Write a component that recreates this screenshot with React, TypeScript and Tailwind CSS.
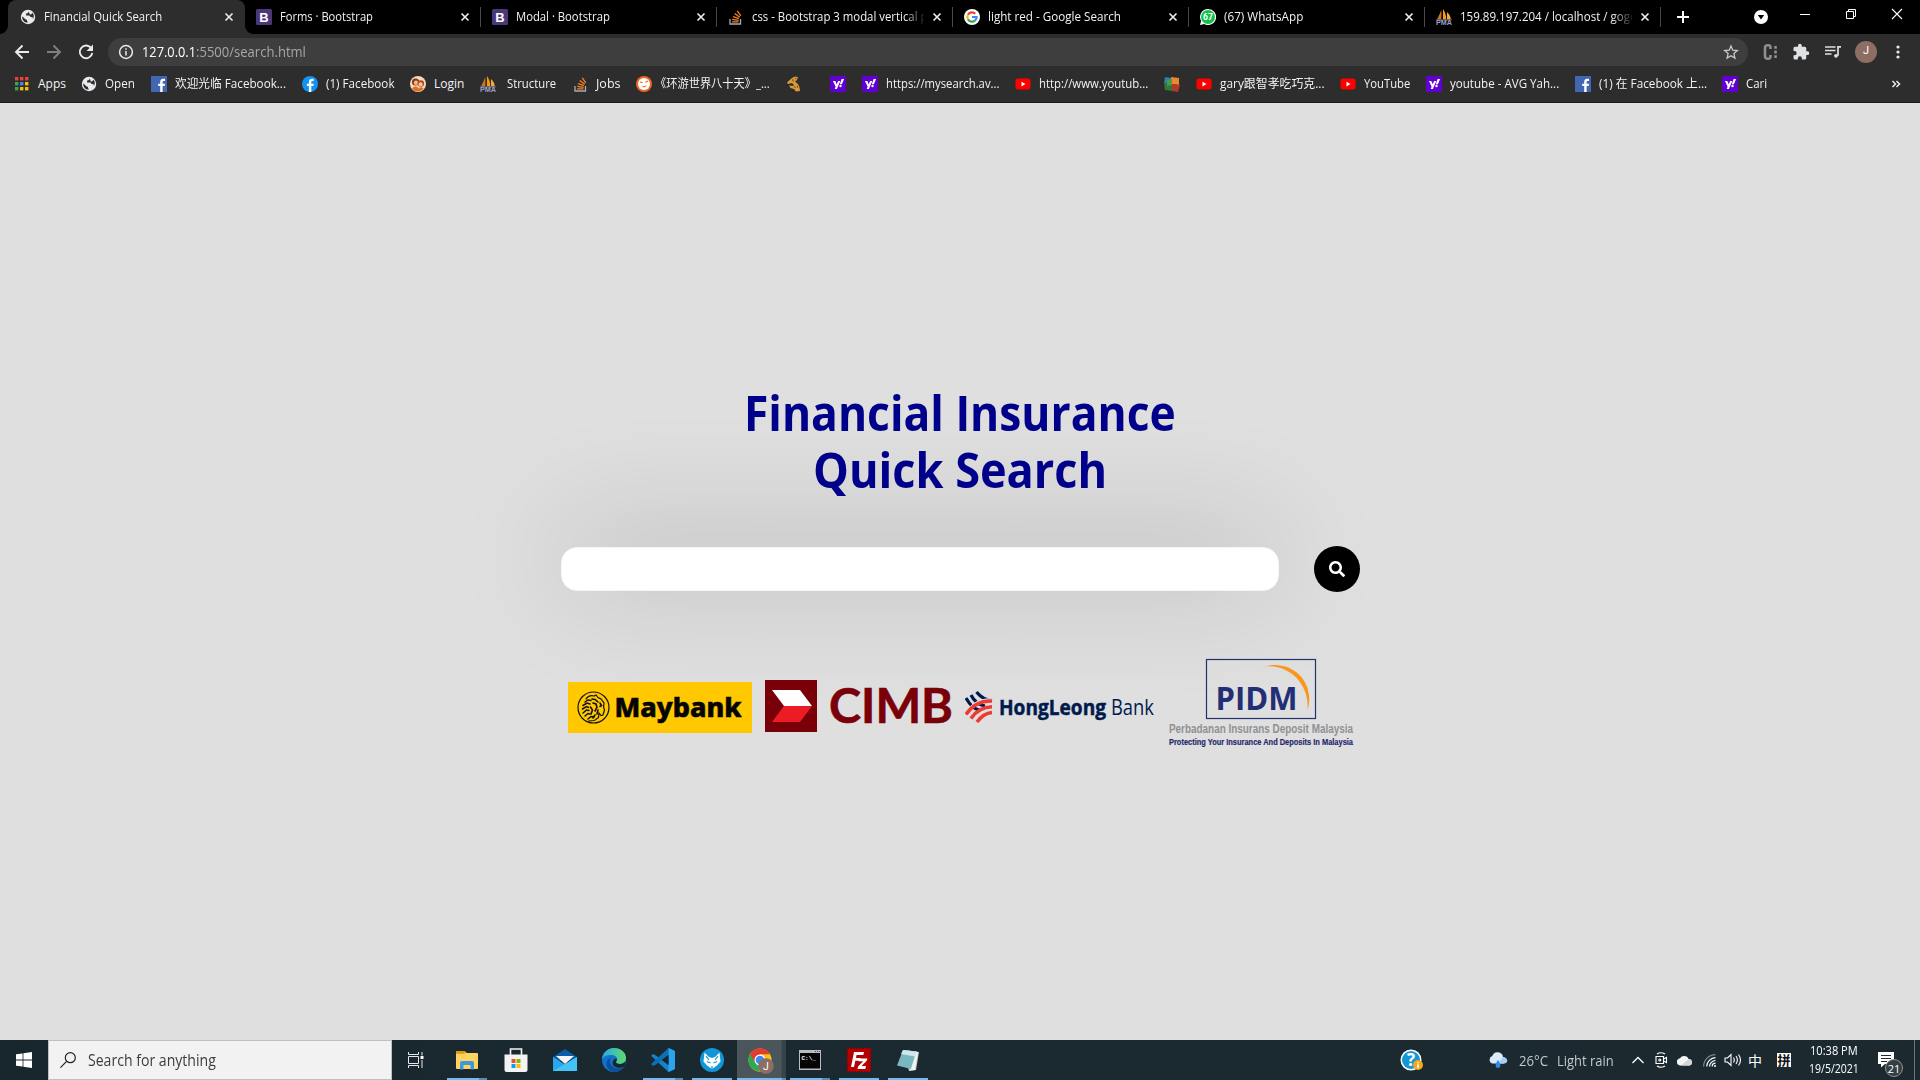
import React, { useLayoutEffect, useRef, useState } from "react";

const UI_FONT = "font-['Open_Sans','Noto_Sans_CJK_SC',sans-serif]";

/* One line of text, condensed or widened to a given width. */
function Fit({ text, w, className = "" }: { text: string; w: number; className?: string }) {
  const ref = useRef<HTMLSpanElement>(null);
  const [scale, setScale] = useState(1);
  useLayoutEffect(() => {
    if (ref.current) setScale(w / ref.current.offsetWidth);
  }, [w, text]);
  return (
    <span className={`block shrink-0 whitespace-nowrap ${className}`} style={{ width: w }}>
      <span ref={ref} className="inline-block origin-left" style={{ transform: `scaleX(${scale})` }}>
        {text}
      </span>
    </span>
  );
}

/* ---------- favicons ---------- */
const Globe = () => (
  <svg className="block size-4" viewBox="0 0 16 16">
    <circle cx="8" cy="8" r="7.2" fill="#e8eaed" />
    <path d="M2.2 7.2 5.6 10.4 7 10.8v1.2l1 1.6C4.600 13.800 2 11.200 2.200 7.200zM8.800 2.400 8 4 6.200 4.600 6 6.400h3.400l1.200 1.600 2 .2.4 1.800c1.200-2 1-4.800-.6-6.200l-1 1.400-1.600.2z" fill="#2d2d2d" />
  </svg>
);
const Boot = () => (
  <svg className="block size-4" viewBox="0 0 16 16">
    <rect width="16" height="16" rx="1.500" fill="#4c3778" />
    <text x="8" y="12.600" textAnchor="middle" fontSize="13" fontWeight="700" fontFamily="Liberation Sans, sans-serif" fill="#fff">B</text>
  </svg>
);
const Stack = () => (
  <svg className="block size-4" viewBox="0 0 16 16" fill="none" strokeWidth="1.300">
    <path d="M2 10v5h10.500v-5" stroke="#a8adb2" />
    <path d="M4 12.800h6.500M4.200 10.400l6.400.9M5 7.600l5.900 2.100M6.700 4.600l5 3.700M9.300 1.800l3.500 5" stroke="#f48024" />
  </svg>
);
const Google = () => (
  <svg className="block size-4" viewBox="0 0 16 16">
    <circle cx="8" cy="8" r="8" fill="#fff" />
    <g fill="none" strokeWidth="2.200">
      <path d="M11.300 4.700A4.700 4.700 0 0 0 3.900 5.800" stroke="#ea4335" />
      <path d="M3.900 5.800a4.700 4.700 0 0 0 0 4.400" stroke="#fbbc05" />
      <path d="M3.900 10.200a4.700 4.700 0 0 0 7.100 1.400" stroke="#34a853" />
      <path d="M11 11.600A4.500 4.500 0 0 0 12.600 8H8" stroke="#4285f4" />
    </g>
  </svg>
);
const Whats = () => (
  <svg className="block size-4" viewBox="0 0 16 16">
    <path d="M8 0a8 8 0 1 1-3.800 15L0 16l1.100-4A8 8 0 0 1 8 0z" fill="#fff" />
    <circle cx="8" cy="8" r="7" fill="#12c04a" />
    <text x="8" y="11" textAnchor="middle" fontSize="8.500" fontWeight="700" fontFamily="Roboto, sans-serif" fill="#fff">67</text>
  </svg>
);
const Pma = () => (
  <svg className="block size-4" viewBox="0 0 16 16">
    <path d="M5.500 1 1 10.500h4.300z" fill="#c8791a" />
    <path d="M7 0v10.500h3.200C10.500 6.500 9 2.500 7 0z" fill="#f89c0e" />
    <path d="M11 3v7.500h3.800C14.800 7.500 13 4.800 11 3z" fill="#f6a93b" />
    <path d="M0 10.500h16l-.5 1H.5z" fill="#6c78af" />
    <text x="0" y="16" fontSize="6.500" textLength="16" lengthAdjust="spacingAndGlyphs" fontWeight="700" fontFamily="Liberation Sans, sans-serif" fill="#9aa0c4">PMA</text>
  </svg>
);
const Apps = () => {
  const c = ["#ea4335", "#ea4335", "#ea4335", "#34a853", "#4285f4", "#fbbc05", "#34a853", "#fbbc05", "#fbbc05"];
  return (
    <svg className="block size-4" viewBox="0 0 16 16">
      {c.map((f, i) => (
        <rect key={i} x={1 + (i % 3) * 5} y={1 + Math.floor(i / 3) * 5} width="3.400" height="3.400" fill={f} />
      ))}
    </svg>
  );
};
const F_PATH = "M9.200 16v-5.900h-2V7.800h2V6c0-2.100 1.200-3.200 3.100-3.200.8 0 1.500.1 1.700.1V5h-1.200c-1 0-1.200.5-1.200 1.200v1.600H14l-.3 2.300h-2.100V16z";
const FbSquare = () => (
  <svg className="block size-4" viewBox="0 0 16 16"><rect width="16" height="16" fill="#4267b2" /><path d={F_PATH} fill="#fff" /></svg>
);
const FbRound = () => (
  <svg className="block size-4" viewBox="0 0 16 16"><circle cx="8" cy="8" r="8" fill="#1195f5" /><path d={F_PATH} transform="translate(-2.300 0)" fill="#fff" /></svg>
);
const Login = () => (
  <svg className="block size-4" viewBox="0 0 16 16">
    <circle cx="8" cy="8" r="8" fill="#f3d9bd" />
    <circle cx="5.600" cy="6" r="3.600" fill="#8a3414" /><circle cx="6" cy="6.800" r="2.200" fill="#f3b98a" />
    <circle cx="10.800" cy="7.600" r="3.300" fill="#b4471a" /><circle cx="10.600" cy="8.400" r="2.100" fill="#f7c79b" />
    <path d="M2 13c1-3 5-3.400 6.500-.6 2-2 4.500-1.200 5 .6a8 8 0 0 1-11.500 0z" fill="#e2711d" />
  </svg>
);
const Orange = () => (
  <svg className="block size-4" viewBox="0 0 16 16">
    <circle cx="8" cy="8" r="8" fill="#f26522" /><circle cx="8" cy="8" r="6" fill="#fff" />
    <path d="M4 6 6.500 6.600M12 5 9.500 6.200M6.500 10.300c1.500.8 2.800.4 3.800-.8" stroke="#f26522" strokeWidth="1.100" fill="none" />
  </svg>
);
const Giraffe = () => (
  <svg className="block size-4" viewBox="0 0 16 16">
    <path d="M1 6.500 6 2l3-1.500L12 1l-1 3-2 1.500c2 1.500 4 3 4.500 6L14 15l-4 .5-2-2.500-3.500-1L3 9.500l4 .5 1-1-2-2-4 1z" fill="#d99a3a" />
    <path d="m6 3 2 1-1 2zM9 1.500l2 1-1.500 1zM8 10l2 1-1 1.500zM11 9l1.500 2-1.500 1z" fill="#7f4a14" />
  </svg>
);
const Yahoo = () => (
  <svg className="block size-4" viewBox="0 0 16 16">
    <rect width="16" height="16" fill="#6001d2" />
    <path d="M3 5h2.300l1.400 3.300L8.100 5h2.200L6.900 13H4.700l.9-2.200zM11.600 3h2.500l-2.200 5.300H9.800z" fill="#fff" /><circle cx="10.500" cy="10" r="1.200" fill="#fff" />
  </svg>
);
const Yt = () => (
  <svg className="block size-4" viewBox="0 0 16 16"><rect x="0.500" y="2.600" width="15" height="11" rx="2.800" fill="#f00" /><path d="M6.500 5.800v4.600L10.500 8z" fill="#fff" /></svg>
);
const Avg = () => (
  <svg className="block size-4" viewBox="0 0 16 16">
    <path d="m1 1 6 1v6L0 7z" fill="#2b7fb3" /><path d="m7 1 8 1v7L7 8z" fill="#e8892b" />
    <path d="M0 7l8 1v7l-7-1z" fill="#2f7a3b" /><path d="m8 8 8 1-2 7-6-1z" fill="#b5382a" /><path d="m3 4 5-1v6l-5 1z" fill="#4f9a44" />
  </svg>
);
const Puzzle = () => (
  <svg className="block size-[18px]" viewBox="0 0 24 24" fill="#dfe1e5">
    <path d="M20.500 11H19V7a2 2 0 0 0-2-2h-4V3.500a2.500 2.500 0 0 0-5 0V5H4a2 2 0 0 0-2 2v3.800h1.500a2.700 2.700 0 0 1 0 5.400H2V20a2 2 0 0 0 2 2h3.800v-1.500a2.700 2.700 0 0 1 5.400 0V22H17a2 2 0 0 0 2-2v-4h1.500a2.500 2.500 0 0 0 0-5z" />
  </svg>
);
const Cross = () => (
  <svg className="block size-4" viewBox="0 0 16 16" stroke="#e8eaed" strokeWidth="1.700"><path d="m4.500 4.500 7 7m0-7-7 7" /></svg>
);

/* ---------- browser ---------- */
const tabs: { icon: React.ReactNode; title: string; w: number }[] = [
  { icon: <Globe />, title: "Financial Quick Search", w: 118 },
  { icon: <Boot />, title: "Forms · Bootstrap", w: 93 },
  { icon: <Boot />, title: "Modal · Bootstrap", w: 94 },
  { icon: <Stack />, title: "css - Bootstrap 3 modal vertical po", w: 182 },
  { icon: <Google />, title: "light red - Google Search", w: 133 },
  { icon: <Whats />, title: "(67) WhatsApp", w: 79 },
  { icon: <Pma />, title: "159.89.197.204 / localhost / goge", w: 176 },
];

function Tabs() {
  return (
    <div className="flex h-[34px] bg-black pl-2">
      {tabs.map((t, i) => (
        <div key={i} className={i === 0 ? "relative flex h-full w-[237px] shrink-0 items-center rounded-t-lg bg-[#2d2d2d] pl-3" : "relative flex h-full w-[236px] shrink-0 items-center pl-[11px]"}>
          {i === 0 && (
            <>
              <span className="absolute bottom-0 -left-2 size-2 bg-[radial-gradient(circle_at_0_0,transparent_7.5px,#2d2d2d_8px)]" />
              <span className="absolute -right-2 bottom-0 size-2 bg-[radial-gradient(circle_at_100%_0,transparent_7.5px,#2d2d2d_8px)]" />
            </>
          )}
          {t.icon}
          <div className="ml-2 w-[172px] overflow-hidden [mask-image:linear-gradient(to_right,black_152px,transparent_174px)]">
            <Fit text={t.title} w={t.w} className="text-[12px] leading-[18px] text-[#f1f3f4]" />
          </div>
          <span className="ml-[5px]"><Cross /></span>
          {i > 0 && <span className="absolute top-[7px] right-0 h-5 w-px bg-[#4a4a4a]" />}
        </div>
      ))}
      <svg className="mt-[9px] ml-[14px] block size-4" viewBox="0 0 16 16" stroke="#fff" strokeWidth="2"><path d="M8 2v12M2 8h12" /></svg>
      <svg className="mt-[9px] ml-[62px] block size-4" viewBox="0 0 16 16"><circle cx="8" cy="8" r="7" fill="#fff" /><path d="M4.800 6h6.400L8 10.400z" fill="#000" /></svg>
      <svg className="mt-[6px] ml-[28px] block size-4" viewBox="0 0 16 16" stroke="#fff"><path d="M3 8.500h10" /></svg>
      <svg className="mt-[6px] ml-[30px] block size-4" viewBox="0 0 16 16" stroke="#fff" fill="none"><path d="M3.500 5.500h7v7h-7zM5.500 5.500v-2h7v7h-2" /></svg>
      <svg className="mt-[6px] ml-[30px] block size-4" viewBox="0 0 16 16" stroke="#fff" strokeWidth="1.100"><path d="m3 3 10 10m0-10L3 13" /></svg>
    </div>
  );
}

function Toolbar() {
  return (
    <div className="flex h-[35px] items-center pl-[11px]">
      <svg className="block size-5" viewBox="0 0 20 20" stroke="#e8eaed" strokeWidth="1.900" fill="none"><path d="M18 10H5M11.500 3.500 5 10l6.500 6.500" /></svg>
      <svg className="ml-[13px] block size-5" viewBox="0 0 20 20" stroke="#7d7f82" strokeWidth="1.900" fill="none"><path d="M3 10h12.500M9.500 3.500 16 10l-6.500 6.500" /></svg>
      <svg className="ml-3 block size-5" viewBox="0 0 20 20" fill="none"><path d="M15.300 6.300A6.300 6.300 0 1 0 16.300 11" stroke="#e8eaed" strokeWidth="1.900" /><path d="M17 2.500V9h-6.500z" fill="#e8eaed" /></svg>
      <div className="ml-3 flex h-7 w-[1640px] items-center rounded-full bg-[#3e3e3e] pr-[9px] pl-[10px]">
        <svg className="block size-4" viewBox="0 0 16 16" stroke="#e8eaed" strokeWidth="1.500" fill="none"><circle cx="8" cy="8" r="6.400" /><path d="M8 7v4.600M8 4.300v1.500" /></svg>
        <Fit text="127.0.0.1" w={54} className="ml-2 text-[14px] leading-5 text-white" />
        <Fit text=":5500/search.html" w={110} className="text-[14px] leading-5 text-[#a5a7aa]" />
        <svg className="ml-auto block size-4" viewBox="0 0 24 24" fill="none" stroke="#c9cbce" strokeWidth="1.900"><path d="m12 3 2.600 6.300 6.900.6-5.200 4.500 1.600 6.700-5.900-3.600-5.900 3.600 1.600-6.700L2.500 9.900l6.900-.6z" /></svg>
      </div>
      <svg className="ml-[14px] block h-[18px] w-4" viewBox="0 0 16 18" fill="none" stroke="#8d8f92" strokeWidth="2.600"><path d="M8.500 6V4.500A2 2 0 0 0 6.500 2.300h-1a2.500 2.500 0 0 0-2.500 2.500v8.400a2.500 2.500 0 0 0 2.500 2.500h1a2 2 0 0 0 2-2.200V12" /><path d="M13.500 3v12" strokeDasharray="2.800 1.800" /></svg>
      <span className="ml-[14px]"><Puzzle /></span>
      <svg className="ml-[14px] block size-[18px]" viewBox="0 0 18 18" fill="none" stroke="#dfe1e5" strokeWidth="1.700"><path d="M1 4h10.500M1 7.500h10.500M1 11h6.500M17 3.800h-3v9" /><circle cx="12" cy="12.800" r="1.900" fill="#dfe1e5" stroke="none" /></svg>
      <span className="ml-[13px] flex size-[22px] items-center justify-center rounded-full bg-[#8d6e63] font-[Roboto,sans-serif] text-[11px] text-white">J</span>
      <svg className="ml-[13px] block size-4" viewBox="0 0 16 16" fill="#e8eaed"><circle cx="8" cy="3" r="1.600" /><circle cx="8" cy="8" r="1.600" /><circle cx="8" cy="13" r="1.600" /></svg>
    </div>
  );
}

/* box = full slot width; w = label width */
const marks: { icon: React.ReactNode; text?: string; w?: number; box: number; gap?: number }[] = [
  { icon: <Apps />, text: "Apps", w: 28, box: 67 },
  { icon: <Globe />, text: "Open", w: 30, box: 70 },
  { icon: <FbSquare />, text: "欢迎光临 Facebook...", w: 111, box: 151 },
  { icon: <FbRound />, text: "(1) Facebook", w: 69, box: 108 },
  { icon: <Login />, text: "Login", w: 30, box: 70 },
  { icon: <Pma />, text: "Structure", w: 49, box: 93, gap: 11 },
  { icon: <Stack />, text: "Jobs", w: 25, box: 63, gap: 7 },
  { icon: <Orange />, text: "《环游世界八十天》_...", w: 115, box: 150, gap: 3 },
  { icon: <Giraffe />, box: 44 },
  { icon: <Yahoo />, box: 32 },
  { icon: <Yahoo />, text: "https://mysearch.av...", w: 113, box: 153 },
  { icon: <Yt />, text: "http://www.youtub...", w: 109, box: 149 },
  { icon: <Avg />, box: 32 },
  { icon: <Yt />, text: "gary跟智孝吃巧克...", w: 105, box: 144 },
  { icon: <Yt />, text: "YouTube", w: 46, box: 86 },
  { icon: <Yahoo />, text: "youtube - AVG Yah...", w: 109, box: 149 },
  { icon: <FbSquare />, text: "(1) 在 Facebook 上...", w: 108, box: 147 },
  { icon: <Yahoo />, text: "Cari", w: 21, box: 168 },
];

function Bookmarks() {
  return (
    <div className="flex h-[34px] items-center border-b border-[#1c1c1c] pb-[3px] pl-[14px]">
      {marks.map((m, i) => (
        <div key={i} className="flex shrink-0 items-center" style={{ width: m.box }}>
          {m.icon}
          {m.text && (
            <span style={{ marginLeft: m.gap ?? 8 }}>
              <Fit text={m.text} w={m.w!} className="text-[12px] leading-[18px] text-[#f1f3f4]" />
            </span>
          )}
        </div>
      ))}
      <svg className="block size-3" viewBox="0 0 12 12" fill="none" stroke="#e8eaed" strokeWidth="1.500"><path d="m2.500 3 3 3-3 3M6.500 3l3 3-3 3" /></svg>
    </div>
  );
}

/* ---------- bank logos ---------- */
const Maybank = () => (
  <svg className="block h-[51px] w-[184px]" viewBox="0 0 184 51">
    <rect width="184" height="51" fill="#ffc800" />
    <circle cx="25.500" cy="25.500" r="15.500" fill="none" stroke="#111" strokeWidth="1.200" />
    <g fill="none" stroke="#111" strokeWidth="1.200" strokeLinecap="round">
      <path d="M18 17c2-3 5-4 8-3l2-1 2 2.500 3 1.500 3 4-.5 4 1 3-1.500 5-2 .5-2-2.500-.5 4.500-4 3-6 .5" />
      <path d="M17 20l3-2 3 .5M15 23.500l4-2.500 3 1M14.500 27l4-2.500 2 1M15 31l3.500-3 2.500.5M17 34l3-2.500 2 .5M20 37l3-2.500 3 .5" strokeWidth="1.500" />
      <path d="M24 17l3 .5 3 2.500M25 21l3 1 1 3.500-2 3.500M32 21l1.500 2.500-1.500 1M22.500 25l2 3-1.500 4M30 28l-1 4M27 33l-2 3" strokeWidth="1.600" />
    </g>
    <text x="46.500" y="35" textLength="127" lengthAdjust="spacingAndGlyphs" fontSize="27" fontWeight="800" fontFamily="Noto Sans, sans-serif" fill="#050505" stroke="#050505" strokeWidth="0.600">Maybank</text>
  </svg>
);
const Cimb = () => (
  <svg className="block h-[52px] w-[188px]" viewBox="0 0 188 52">
    <rect width="52" height="52" fill="#790008" />
    <path d="M7 10h28l12 16H19z" fill="#fff" />
    <path d="M19 26h28L35 42H7z" fill="#ed1c24" />
    <text x="64" y="43" textLength="124" lengthAdjust="spacingAndGlyphs" fontSize="47" fontWeight="700" fontFamily="Lato, sans-serif" fill="#790008" stroke="#790008" strokeWidth="0.600">CIMB</text>
  </svg>
);
const HongLeong = () => (
  <svg className="block h-8 w-[190px]" viewBox="0 0 190 32">
    <g fill="none" stroke="#001a4d" strokeWidth="3.200">
      <path d="M1 7c4 7 8 11 13 12M6 4c3 6 8 10 14 11M11.500 1c4 5 9 8 15.500 8.500" />
    </g>
    <path d="M1 22C7 13 16 7.500 27 8.500" fill="none" stroke="#dedede" strokeWidth="2" />
    <g fill="none" stroke="#ee3a30" strokeWidth="3.600">
      <path d="M1 23.500C7 14.500 16 9.500 27 10" /><path d="M6 27.500C11 20 19 16 27 15.800" /><path d="M12 31C16 25.500 21 22 27 21.500" />
    </g>
    <text x="34" y="24" textLength="107" lengthAdjust="spacingAndGlyphs" fontSize="21.500" fontWeight="700" fontFamily="Open Sans, sans-serif" fill="#001a4d" stroke="#001a4d" strokeWidth="0.500">HongLeong</text>
    <text x="146" y="24" textLength="43" lengthAdjust="spacingAndGlyphs" fontSize="21.500" fontWeight="400" fontFamily="Open Sans, sans-serif" fill="#001a4d">Bank</text>
  </svg>
);
const Pidm = () => (
  <svg className="block h-[90px] w-[186px]" viewBox="0 0 186 90">
    <rect x="38.500" y="1.500" width="109" height="59" fill="none" stroke="#27306f" strokeWidth="1.200" />
    <text x="47.500" y="51.500" textLength="82" lengthAdjust="spacingAndGlyphs" fontSize="33" fontWeight="700" fontFamily="Open Sans, sans-serif" fill="#232f74">PIDM</text>
    <path d="M96 8.500C124 1 148 24 139.500 52.500 142 27 122 5.500 96 8.500z" fill="#f9971d" />
    <text x="1" y="75" textLength="184" lengthAdjust="spacingAndGlyphs" fontSize="12" fontWeight="700" fontFamily="Liberation Sans, sans-serif" fill="#8f9194">Perbadanan Insurans Deposit Malaysia</text>
    <text x="1" y="86.500" textLength="184" lengthAdjust="spacingAndGlyphs" fontSize="9.500" fontWeight="700" fontFamily="Liberation Sans, sans-serif" fill="#1f2a6d" stroke="#1f2a6d" strokeWidth="0.200">Protecting Your Insurance And Deposits In Malaysia</text>
  </svg>
);

function Page() {
  return (
    <main className="flex h-[937px] flex-col items-center bg-[#dfdfdf] pt-[281px]">
      <h1 className="flex flex-col items-center text-[48px] leading-[57px] font-bold text-[#00008b]">
        <Fit text="Financial Insurance" w={432} />
        <Fit text="Quick Search" w={294} />
      </h1>
      <div className="mt-12 flex items-center">
        <div className="my-px h-11 w-[718px] rounded-2xl border border-[#f4f6f8] bg-white shadow-[0_-12px_115px_rgba(0,0,0,0.21)]" />
        <div className="relative ml-[35px] flex size-[46px] items-center justify-center rounded-full bg-black">
          <svg className="block size-4" viewBox="0 0 512 512" fill="#fff"><path d="M505 442.700 405.300 343c-4.500-4.500-10.600-7-17-7H372c27.600-35.300 44-79.700 44-128C416 93.100 322.900 0 208 0S0 93.100 0 208s93.100 208 208 208c48.300 0 92.700-16.400 128-44v16.300c0 6.400 2.500 12.500 7 17l99.700 99.700c9.400 9.400 24.600 9.400 33.900 0l28.300-28.300c9.400-9.400 9.400-24.600.1-34zM208 336c-70.700 0-128-57.200-128-128 0-70.700 57.200-128 128-128 70.700 0 128 57.200 128 128 0 70.700-57.200 128-128 128z" /></svg>
        </div>
      </div>
      <div className="relative mt-[66px] flex w-[784px] items-start">
        <div className="mt-6"><Maybank /></div>
        <div className="mt-[22px] ml-[13px]"><Cimb /></div>
        <div className="mt-[33px] ml-3"><HongLeong /></div>
        <div className="ml-[13px]"><Pidm /></div>
      </div>
    </main>
  );
}

/* ---------- taskbar ---------- */
const Explorer = () => (
  <svg className="block size-6" viewBox="0 0 24 24"><path d="M1 3h9l2 2H1z" fill="#e09a10" /><rect x="1" y="5" width="22" height="16" rx="1" fill="#ffd262" /><path d="M1 5h9V3.500L9.500 6H1z" fill="#e8a51c" /><path d="M5 21.500V15a2 2 0 0 1 2-2h10a2 2 0 0 1 2 2v6.500h-3.500V17h-7v4.500z" fill="#3b99dd" /></svg>
);
const Store = () => (
  <svg className="block size-6" viewBox="0 0 24 24"><path d="M6.500 7V1h11v6" fill="none" stroke="#f3f3f3" strokeWidth="1.600" /><path d="M0.500 6.500h23V22a2 2 0 0 1-2 2h-19a2 2 0 0 1-2-2z" fill="#f3f3f3" /><path d="M7.500 11h4v4h-4z" fill="#f25022" /><path d="M12.500 11h4v4h-4z" fill="#7fba00" /><path d="M7.500 16h4v4h-4z" fill="#00a4ef" /><path d="M12.500 16h4v4h-4z" fill="#ffb900" /></svg>
);
const Mail = () => (
  <svg className="block size-6" viewBox="0 0 24 24"><path d="M0 9 12 1l12 8v4H0z" fill="#0a5ba8" /><path d="M3 8h18l-9 8z" fill="#f4f4f4" /><path d="M0 9l12 7.500L24 9v14H0z" fill="#2aa7ea" /><path d="M0 23 24 9v14z" fill="#44c4f6" /></svg>
);
const Edge = () => (
  <svg className="block size-6" viewBox="0 0 24 24">
    <defs><linearGradient id="eg" x1="0" x2="1"><stop offset="0" stopColor="#2aa6e8" /><stop offset="1" stopColor="#5fdc6c" /></linearGradient></defs>
    <circle cx="12" cy="12" r="12" fill="#1173c7" />
    <path d="M0 11C1 4 6 0 12 0c7 0 12 4.500 12 10 0 3.500-2.600 6-6 6-2.500 0-4-1-4-2 0-.8 1-1.200 1-3C15 8.500 12 7 9 7 5 7 1.500 8.500 0 11z" fill="url(#eg)" />
    <path d="M9 9.500c-2 3-1 7 2 9.300 3 2.200 7.500 2.200 10.800.2C19.500 22.500 16 24 12 24c-5-1-8-5-7.500-9 .3-2.500 2-4.500 4.500-5.500z" fill="#0c4f9e" />
    <path d="M14 14c0 1 1.500 2 4 2 2.400 0 4-1 5-2.500.6 2-.2 4-1.200 5.200-3 1.600-7.300 1.400-9.800-.7-1.500-1.400-2-4-.5-6 1-1.500 3.500-1.500 3.500-1 0 1.800-1 2.200-1 3z" fill="#17262d" />
  </svg>
);
const VsCode = () => (
  <svg className="block size-6" viewBox="0 0 24 24"><path d="M17.500 0 24 3v18l-6.500 3L2.500 10 .5 8.300 0 8l2-2 3 1.500L17.500 17z" fill="#1583cc" /><path d="M17.500 7 5 16.500 2 18l-2-2L17.500 0z" fill="#0d6fb5" /><path d="M17.500 0 24 3v18l-6.500 3z" fill="#2ba4ee" /><path d="M17.500 7v10L11 12z" fill="#17262d" /></svg>
);
const Wolf = () => (
  <svg className="block size-6" viewBox="0 0 24 24"><circle cx="12" cy="12" r="12" fill="#1296d8" /><path d="M4.500 4.500 9 9l3 1 3-1 4.500-4.500 1 9-3.500 4-5 3.500-5-3.500-3.500-4z" fill="#fff" /><path d="m6 8 3 4M18 8l-3 4M7 13.500l3.500 1.500M17 13.500l-3.500 1.500M12 18v3" stroke="#1296d8" strokeWidth="1.200" /></svg>
);
const Chrome = () => (
  <svg className="block h-6 w-[26px] overflow-visible" viewBox="0 0 26 24">
    <circle cx="12" cy="12" r="11.500" fill="#fbc116" />
    <path d="M2 6.200A11.500 11.500 0 0 0 11 23.500L16 14l-8-1z" fill="#2da94f" /><path d="M12 6.200h10A11.500 11.500 0 0 0 2 6.200L7 14z" fill="#e33b2e" />
    <circle cx="12" cy="12" r="5.500" fill="#fff" /><circle cx="12" cy="12" r="4.300" fill="#4285f4" />
    <circle cx="18" cy="18" r="7.800" fill="#8d6e63" /><text x="18" y="21.800" fontSize="10.500" textAnchor="middle" fontFamily="Roboto, sans-serif" fill="#fff">J</text>
  </svg>
);
const Cmd = () => (
  <svg className="block size-6" viewBox="0 0 24 24"><rect x="1" y="2" width="22" height="20" fill="#b9bcc0" /><rect x="2" y="5" width="20" height="15.500" fill="#050505" /><path d="M17 3.500h1m1 0h1m1 0h1" stroke="#456" /><text x="3.500" y="11.500" fontSize="6" fontWeight="700" fontFamily="Liberation Mono, monospace" fill="#fff">C:\_</text></svg>
);
const Fz = () => (
  <svg className="block size-6" viewBox="0 0 24 24"><rect width="24" height="24" fill="#b40000" /><rect x="0.500" y="0.500" width="23" height="23" fill="none" stroke="#7a0000" strokeDasharray="1.500 1.500" /><path d="M4 19 7 4h10l-.7 3H9.500L9 10h4.500l-.6 2.800H8.300L7 19zM12 10.500h8.500L19.500 13l-5 5H19l-.7 3H10.500l.6-2.500 5-5.200h-4.600z" fill="#fff" /></svg>
);
const Notepad = () => (
  <svg className="block size-6" viewBox="0 0 24 24"><path d="M8 2 23 4l-3 18-7 1z" fill="#c9ccc4" /><path d="M7 2 20.500 3.500 15 21 1 17.500z" fill="#79b7c2" /><path d="M7 2l13.500 1.500-1.500 5L5 6z" fill="#cfe6ea" /><path d="M15 21 20.500 3.500l1.500 1L19 22l-6 .5z" fill="#eef3f3" /></svg>
);

const apps: { icon: React.ReactNode; line?: "full" | "split"; active?: boolean }[] = [
  { icon: <Explorer />, line: "split" },
  { icon: <Store /> },
  { icon: <Mail /> },
  { icon: <Edge /> },
  { icon: <VsCode />, line: "split" },
  { icon: <Wolf />, line: "full" },
  { icon: <Chrome />, line: "split", active: true },
  { icon: <Cmd />, line: "split" },
  { icon: <Fz />, line: "full" },
  { icon: <Notepad />, line: "full" },
];

function Taskbar() {
  return (
    <footer className="flex h-10 bg-linear-to-r from-[#18262d] via-[#1b2a30] to-[#1c2a30]">
      <div className="flex w-12 items-center justify-center">
        <svg className="block size-4" viewBox="0 0 16 16" fill="#fff"><path d="M0 2.300 6.600 1.400v6.200H0zM7.400 1.300 16 0v7.600H7.400zM0 8.400h6.600v6.200L0 13.700zM7.400 8.400H16V16l-8.600-1.300z" /></svg>
      </div>
      <div className="flex w-[344px] items-center border border-[#bfbfbf] bg-[#f2f2f2] pl-[11px]">
        <svg className="block size-4" viewBox="0 0 16 16" fill="none" stroke="#222" strokeWidth="1.200"><circle cx="10.300" cy="5.700" r="5" /><path d="M6.600 9.400.4 15.600" /></svg>
        <Fit text="Search for anything" w={128} className="ml-3 text-[15.5px] leading-6 text-[#3c3c3c]" />
      </div>
      <div className="flex w-[51px] items-center pl-4">
        <svg className="block size-4" viewBox="0 0 16 16" fill="none" stroke="#e8e8e8"><path d="M.5 0v2.500h10V0M.5 16v-2.500h10V16M.5 4.500h10v7H.5zM14 0v3.500M14 8v8" /><path d="M12.500 4h3v3h-3z" fill="#fff" stroke="none" /></svg>
      </div>
      <div className="flex">
        {apps.map((a, i) => (
          <div key={i} className={a.active ? "flex h-10 w-[49px] flex-col items-center bg-linear-to-r from-[#4a565c] from-[44px] to-[#36444a] to-[45px]" : "flex h-10 w-[49px] flex-col items-center pr-px"}>
            <div className="flex h-[38px] items-center pt-[2px] pr-px">{a.icon}</div>
            {a.line && (
              <div className={a.active ? "flex h-[2px] w-[49px] bg-[#76b9ed]" : "flex h-[2px] w-10 bg-[#76b9ed]"}>
                {a.line === "split" && <span className={a.active ? "ml-auto w-1 bg-[#5a8cb1]" : "ml-auto w-2 bg-[#5a8cb1]"} />}
              </div>
            )}
          </div>
        ))}
      </div>
      <div className="ml-auto flex items-center">
        <svg className="block size-6" viewBox="0 0 24 24"><circle cx="11" cy="12" r="10.500" fill="#fff" /><circle cx="11" cy="12" r="9" fill="#1497d4" /><text x="11" y="18" fontSize="17" fontWeight="700" textAnchor="middle" fontFamily="Open Sans, sans-serif" fill="#fff">?</text><circle cx="18" cy="17" r="5" fill="#f5a81c" /><path d="M18 14v1.300M18 16.300v4" stroke="#fff" strokeWidth="1.500" /></svg>
        <svg className="ml-[64px] block h-[18px] w-5" viewBox="0 0 20 18"><path d="M4 12.500a4 4 0 0 1 .3-7.500A5.500 5.500 0 0 1 15 6a3.400 3.400 0 0 1 1 6.500z" fill="#d9ebfb" /><path d="M10 12.500 15 6c5 .5 6 6 1 6.500z" fill="#a9cdf0" /><path d="M10 9c-3 4-3.300 8 0 8s3-4 0-8z" fill="#2f8be6" /></svg>
        <Fit text="26°C" w={29} className="ml-[11px] text-[15px] leading-5 text-[#c3c8ca]" />
        <Fit text="Light rain" w={57} className="ml-[9px] text-[15px] leading-5 text-[#c3c8ca]" />
        <svg className="ml-[17px] block h-4 w-[14px]" viewBox="0 0 14 16" fill="none" stroke="#fff" strokeWidth="1.300"><path d="m1.500 11 5.500-5.500 5.500 5.500" /></svg>
        <svg className="ml-[10px] block h-4 w-[13px]" viewBox="0 0 13 16" fill="none" stroke="#fff" strokeWidth="1.100"><path d="M1 4.500h7.500v7H1zM8.500 7l3-1.500v5l-3-1.500M2 2q3.500-2.500 8 0M2 14q3.500 2.500 8 0" /><circle cx="4.800" cy="8" r="1" /></svg>
        <svg className="ml-2 block h-[11px] w-[17px]" viewBox="0 0 17 11"><path d="M4 10.500a3.700 3.700 0 0 1 0-7.300A5 5 0 0 1 12.700 4 3.300 3.300 0 0 1 13.500 10.500z" fill="#f5f5f5" /><path d="M5 10.500 12.700 4A3.300 3.300 0 0 1 13.500 10.500z" fill="#d5d5d5" /></svg>
        <svg className="ml-[10px] block size-[13px]" viewBox="0 0 13 13" fill="none" strokeWidth="1.200"><path d="M.6 12.500A12 12 0 0 1 12.500.6" stroke="#7d888d" /><path d="M3.700 12.500A9 9 0 0 1 12.500 3.700M6.500 12.500a6.200 6.200 0 0 1 6-6M9.200 12.500a3.300 3.300 0 0 1 3.300-3.300" stroke="#fff" /><circle cx="12" cy="12" r="1" fill="#fff" /></svg>
        <svg className="ml-2 block h-[14px] w-[18px]" viewBox="0 0 18 14" fill="none" stroke="#fff" strokeWidth="1.100"><path d="M1 5h2.500L7 1.500v11L3.500 9H1zM9.500 4.500q1.600 2.500 0 5M12 3q2.800 4 0 8M14.500 1.500q4 5.500 0 11" /></svg>
        <span className="ml-[6px] font-['Noto_Sans_CJK_SC',sans-serif] text-[14px] leading-5 text-white">中</span>
        <span className="ml-[15px] flex size-[14px] items-center justify-center bg-white font-['Noto_Sans_CJK_SC',sans-serif] text-[13px] leading-[14px] font-bold text-[#111]">拼</span>
        <div className="ml-[18px] flex w-[50px] flex-col items-center gap-px pb-[2px]">
          <Fit text="10:38 PM" w={48} className="text-[12px] leading-[17px] text-white" />
          <Fit text="19/5/2021" w={50} className="text-[12px] leading-[17px] text-white" />
        </div>
        <div className="relative ml-[19px] h-6 w-[26px]">
          <svg className="block h-6 w-4" viewBox="0 0 16 24"><path d="M0 4h16v12H7l-4 3.500V16H0z" fill="#fff" /><path d="M3 7.500h10M3 10.500h10M3 13.500h6" stroke="#1b2a30" /></svg>
          <span className="absolute top-[11px] left-[7px] flex size-[18px] items-center justify-center rounded-full border border-[#8b9396] bg-[#353f43] text-[11px] leading-none text-white">21</span>
        </div>
        <span className="ml-[10px] h-10 w-px bg-[#6b7478]" />
        <span className="w-[5px]" />
      </div>
    </footer>
  );
}

export default function App() {
  return (
    <div className={`flex h-[1080px] w-[1920px] flex-col overflow-hidden ${UI_FONT}`}>
      <header className="h-[103px] bg-[#2d2d2d]">
        <Tabs />
        <Toolbar />
        <Bookmarks />
      </header>
      <Page />
      <Taskbar />
    </div>
  );
}
